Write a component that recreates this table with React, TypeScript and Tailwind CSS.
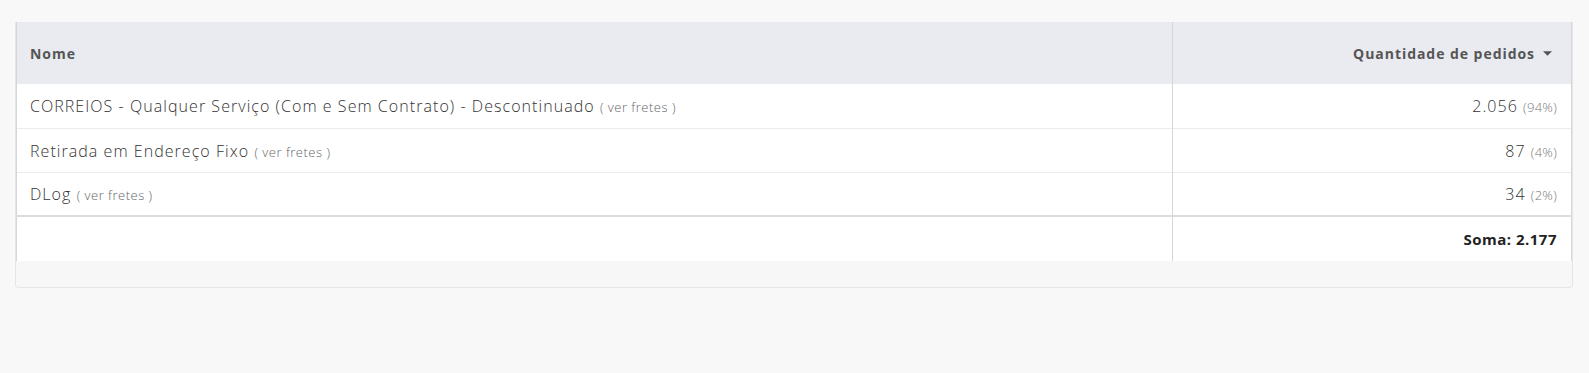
import { useState } from 'react'

type Row = {
  nome: string
  pedidos: string
  pct: string
}

const rows: Row[] = [
  { nome: 'CORREIOS - Qualquer Serviço (Com e Sem Contrato) - Descontinuado', pedidos: '2.056', pct: '94%' },
  { nome: 'Retirada em Endereço Fixo', pedidos: '87', pct: '4%' },
  { nome: 'DLog', pedidos: '34', pct: '2%' },
]

function SortCaret() {
  return (
    <svg className="w-[9px] h-[5px] ml-[8px] mt-[1px]" viewBox="0 0 10 5" fill="currentColor">
      <path d="M0 0h10L5 5z" />
    </svg>
  )
}

/**
 * Relatório de pedidos por forma de envio
 */
export default function App() {
  const [desc] = useState(true)

  return (
    <div
      className="min-h-[373px] bg-[#f8f8f8] pt-[22px] px-[15px]"
      style={{ fontFamily: '"Open Sans", "DejaVu Sans", sans-serif' }}
    >
      <div className="w-[1558px] rounded-b-[4px] border border-t-0 border-[#e6e6e6] bg-[#f7f7f7]">
        <table className="w-full border-collapse bg-white">
          <thead>
            <tr className="h-[62px] bg-[#e9ebf0] text-[14px] font-bold tracking-[0.95px] text-[#555]">
              <th className="border-l border-[#d6d6d6] px-[13px] text-left">Nome</th>
              <th className="w-[399px] border-x border-[#d6d6d6] pr-[19px] text-right">
                <span className="inline-flex items-center">
                  Quantidade de pedidos
                  {desc && <SortCaret />}
                </span>
              </th>
            </tr>
          </thead>
          <tbody className="text-[16px] font-light tracking-[1.05px] text-[#333]">
            {rows.map((row) => (
              <tr key={row.nome} className="h-[44px] border-b border-[#ebebeb] last:border-b-0">
                <td className="border-l border-[#d6d6d6] px-[13px] pt-[1px]">
                  {row.nome}{' '}
                  <a className="text-[13px] tracking-[0.5px] text-[#666] cursor-pointer">( ver fretes )</a>
                </td>
                <td className="border-x border-[#d6d6d6] pr-[14px] pt-[1px] text-right">
                  {row.pedidos}{' '}
                  <span className="text-[13px] tracking-[0.3px] text-[#777]">({row.pct})</span>
                </td>
              </tr>
            ))}
          </tbody>
          <tfoot>
            <tr className="h-[45px] border-t-2 border-[#dcdcdc]">
              <td className="border-l border-[#d6d6d6]" />
              <td className="border-x border-[#d6d6d6] pr-[14px] text-right text-[15px] font-bold tracking-[0.5px] text-[#222]">
                Soma: 2.177
              </td>
            </tr>
          </tfoot>
        </table>
        <div className="h-[26px]" />
      </div>
    </div>
  )
}
